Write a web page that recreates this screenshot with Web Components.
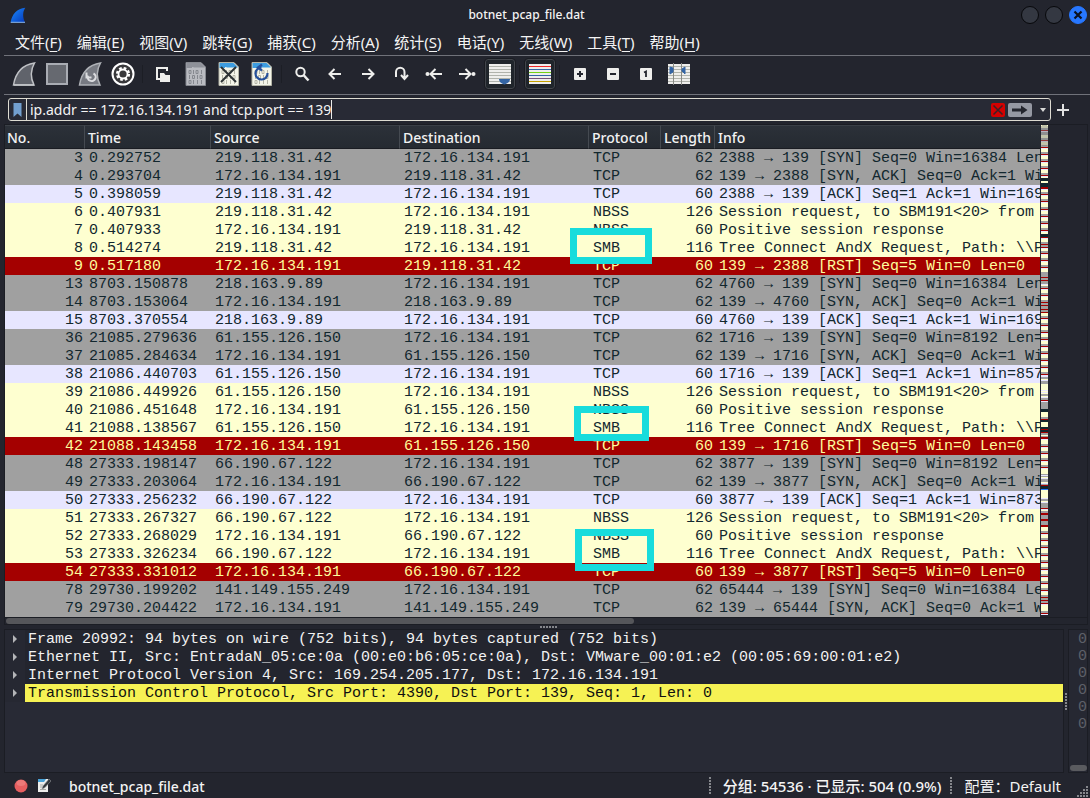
<!DOCTYPE html>
<html lang="zh-CN">
<head>
<meta charset="utf-8">
<title>botnet_pcap_file.dat</title>
<style>
  html { background: #23252e; }
  body { margin: 0; background: #23252e; }
</style>
</head>
<body>
<capture-app></capture-app>

<script>
const BASE = `
  *, *::before, *::after { box-sizing: border-box; }
  button { font: inherit; color: inherit; background: none; border: 0; padding: 0; margin: 0; }
  svg { display: block; }
`;
function define(name, html, setup) {
  const tpl = document.createElement('template');
  tpl.innerHTML = '<style>' + BASE + '</style>' + html;
  customElements.define(name, class extends HTMLElement {
    constructor() {
      super();
      this.attachShadow({ mode: 'open' }).appendChild(tpl.content.cloneNode(true));
      if (setup) setup(this.shadowRoot, this);
    }
  });
}

/* ---------- title bar ---------- */
define('title-bar', `
<style>
  :host { display: grid; grid-template-columns: 1fr auto 1fr; align-items: center; height: 30px; padding: 0 3px 0 10px; }
  h1 { margin: 0 44px 0 0; font-size: 12px; font-weight: 500; line-height: 16px; }
  .win { display: flex; justify-content: flex-end; gap: 6px; }
  .win button { width: 18px; height: 18px; border-radius: 50%; background: #343842; border: 1px solid #07080b; display: grid; place-items: center; }
  .win .close { background: #2777ff; border-color: #2777ff; }
</style>
<svg width="16" height="16" viewBox="0 0 16 16"><defs><linearGradient id="g" x1="0" y1="0" x2="1" y2="1"><stop offset="0" stop-color="#1d8cff"/><stop offset="1" stop-color="#0438b8"/></linearGradient></defs><path d="M.7 15.3C2 7 7 1.500 15.300.7C12.500 5 12.500 10 15 15.300Z" fill="url(#g)"/><path d="M.7 15.300H15" stroke="#8cb9ee"/></svg>
<h1><slot></slot></h1>
<div class="win">
  <button aria-label="最小化"></button><button aria-label="最大化"></button>
  <button class="close" aria-label="关闭"><svg width="10" height="10" viewBox="0 0 10 10"><path d="M1.500 1.500l7 7M8.500 1.500l-7 7" stroke="#0b1020" stroke-width="2.200"/></svg></button>
</div>`);

/* ---------- menu bar ---------- */
define('menu-bar', `
<style>
  :host { display: block; padding: 0 0 0 15px; height: 25px; font-weight: 400; }
  nav { display: flex; gap: 15px; line-height: 25px; }
  u { text-underline-offset: 3px; text-decoration-thickness: 1px; }
</style>
<nav></nav>`, root => {
  root.querySelector('nav').innerHTML = ['文件F','编辑E','视图V','跳转G','捕获C','分析A','统计S','电话Y','无线W','工具T','帮助H']
    .map(t => `<button>${t.slice(0, 2)}(<u>${t[2]}</u>)</button>`).join('');
});

/* ---------- tool bar ---------- */
const sheet = (top, page, ink) => `<path d="M2 0.500H17L21.500 5V23.500H2Z" fill="${page}" stroke="${ink}"/><path d="M2.500 1H16.500L21 5.500H11C9 5.500 8 4 8 6H2.500Z" fill="${top}"/>
  <g fill="none" stroke="${ink}" stroke-width="1"><path d="M5 8.500h2v3H5zM9.500 8v4M12 8.500h2v3h-2zM17.500 8v4M5.500 13v4M8.500 13.500h2v3h-2zM13.500 13v4M16 13.500h2v3h-2zM5 18.500h2v3H5zM9.500 18v4M13.500 18v4M17.500 18v4"/></g>`;
const lines = (cols) => `<rect x="1" y="2" width="22" height="20" fill="#eeeeec"/>` + cols.map((c, i) => `<rect x="1" y="${4 + i * 3}" width="22" height="1" fill="${c}"/>`).join('');
const G = '#b0b3ac';
const arrow = '<path d="M18 12H7M11.500 7L6.500 12l5 5" fill="none" stroke="#eeeeec" stroke-width="2"/>';
const ICONS = {
  start: ['开始捕获', '<path d="M1.500 23C3.500 11 9 3 22.500 1C18.500 8 18.500 16 22 23Z" fill="#60636b" stroke="#bfc1c5" stroke-width="1.500"/><path d="M2 23H22" stroke="#d5d7da" stroke-width="1"/>'],
  stop: ['停止捕获', '<rect x="2" y="2" width="20" height="20" fill="#666970" stroke="#a9acb3" stroke-width="2"/>'],
  restart: ['重新开始捕获', '<path d="M1.500 23C3.500 11 9 3 22.500 1C18.500 8 18.500 16 22 23Z" fill="#777a82" stroke="#aeb1b6" stroke-width="1.500"/><path d="M15.500 11.500a4 4 0 1 1-5.500 2M8.500 10.500v5h5" fill="none" stroke="#dcdde0" stroke-width="2"/>'],
  options: ['捕获选项', '<circle cx="12" cy="12" r="10.500" fill="#38383b" stroke="#fff" stroke-width="2"/><circle cx="12" cy="12" r="5.800" fill="none" stroke="#fff" stroke-width="2.600" stroke-dasharray="2.600 1.955"/><circle cx="12" cy="12" r="4.500" fill="#38383b" stroke="#fff" stroke-width="1.800"/>'],
  open: ['打开', '<path d="M9 17H6V6H16V9" fill="none" stroke="#eeeeec" stroke-width="2"/><path d="M9 11H13L14.500 13H19V20H9Z" fill="#eeeeec"/>'],
  save: ['保存', sheet('#8e9199', '#b9bbc1', '#85888f')],
  close: ['关闭文件', sheet('#3d9de0', '#f4f5e9', '#b4b5a7') + '<path d="M4 5l15 15M19 5L4 20" stroke="#2e3436" stroke-width="2"/>'],
  reload: ['重新加载', sheet('#3d9de0', '#f4f5e9', '#b4b5a7') + '<path d="M17.500 11a6 6 0 1 1-6-5.500M12 2.500l-4 3 4 3" fill="none" stroke="#25509a" stroke-width="2.200"/>'],
  find: ['查找', '<circle cx="10.500" cy="10" r="4.200" fill="none" stroke="#eeeeec" stroke-width="2"/><path d="M13.500 13l5 5.500" stroke="#eeeeec" stroke-width="2.500"/>'],
  back: ['后退', arrow],
  fwd: ['前进', `<g transform="matrix(-1 0 0 1 24 0)">${arrow}</g>`],
  jump: ['跳转到分组', '<path d="M7 15V10a4 4 0 0 1 8.500 0V16M12 13l3.500 4 3.500-4" fill="none" stroke="#eeeeec" stroke-width="2"/>'],
  first: ['首个分组', '<circle cx="5.500" cy="12" r="2" fill="#eeeeec"/><g transform="translate(2 0)">' + arrow + '</g>'],
  last: ['末个分组', `<g transform="matrix(-1 0 0 1 24 0)"><circle cx="5.500" cy="12" r="2" fill="#eeeeec"/><g transform="translate(2 0)">${arrow}</g></g>`],
  scroll: ['自动滚动', lines([G,G,G,G,G,G]) + '<path d="M11 17H22C22 20 18.500 22 16.500 22.500C14 22 11 20 11 17Z" fill="#3465a4"/>'],
  color: ['分组着色', lines(['#ef2929','#3465a4','#73d216','#3465a4','#75507b','#c4a000'])],
  plus: ['放大', '<rect x="6" y="6" width="12" height="12" rx="1" fill="#eeeeec"/><path d="M9 12h6M12 9v6" stroke="#23252e" stroke-width="2"/>'],
  minus: ['缩小', '<rect x="6" y="6" width="12" height="12" rx="1" fill="#eeeeec"/><path d="M9 12h6" stroke="#23252e" stroke-width="2"/>'],
  one: ['正常大小', '<rect x="6" y="6" width="12" height="12" rx="1" fill="#eeeeec"/><path d="M10 10.500L12 9.500V15" fill="none" stroke="#23252e" stroke-width="1.800"/>'],
  cols: ['调整列宽', lines([G,G,G,G,G,G]) + '<path d="M6.500 1V23M14.500 1V23" stroke="#888a85"/><path d="M3 5l3 1v4l-3 2ZM18 5l-3 2v2l3 3Z" fill="#3465a4" stroke="#3465a4"/>']
};
define('tool-icon', `
<style>
  :host { display: block; width: 33px; }
  button { width: 30px; height: 30px; margin: 0 1px 0 2px; display: grid; place-items: center; border: 1px solid transparent; border-radius: 3px; }
  .on { border-color: #42454b; background: #20252b; outline: 1px solid #1a1c22; }
</style>
<button></button>`);
define('tool-bar', `
<style>
  :host { display: block; margin-left: 4px; border: solid #70727a; border-width: 1px 0; }
  .row { display: flex; align-items: center; height: 38px; padding: 0 0 2px 3px; }
  i { width: 1px; height: 18px; margin: 0 3px; background: #1c1e25; }
</style>
<div class="row"></div>`, root => {
  const groups = [['start','stop','restart','options'], ['open','save','close','reload'], ['find','back','fwd','jump','first','last','scroll*'], ['color*'], ['plus','minus','one','cols']];
  const row = root.querySelector('.row');
  groups.forEach((group, i) => {
    if (i) row.append(document.createElement('i'));
    for (const entry of group) {
      const icon = document.createElement('tool-icon');
      const [label, art] = ICONS[entry.replace('*', '')];
      const button = icon.shadowRoot.querySelector('button');
      button.setAttribute('aria-label', label);
      button.classList.toggle('on', entry.endsWith('*'));
      button.innerHTML = `<svg width="24" height="24" viewBox="0 0 24 24">${art}</svg>`;
      row.append(icon);
    }
  });
});

/* ---------- display filter ---------- */
define('filter-bar', `
<style>
  :host { display: flex; align-items: center; gap: 5px; padding: 3px 20px 3px 8px; }
  .field { flex: 1; display: flex; align-items: center; height: 23px; border: 1px solid #dedcd2; border-radius: 3px; background: #282a35; }
  .mark { width: 18px; height: 21px; display: grid; place-items: center; border-right: 1px solid #dedcd2; }
  input { field-sizing: content; height: 19px; padding: 0; margin-left: 3px; border: 0; border-right: 1px solid #eeeeec; background: none; color: #f4f4f4; font: inherit; font-size: 14px; font-weight: 400; outline: 0; }
  .clear { margin-left: auto; width: 14px; height: 14px; border-radius: 2px; background: #d40000; display: grid; place-items: center; }
  .apply { margin: 0 8px 0 3px; width: 24px; height: 14px; border-radius: 2px; background: #9598a3; display: grid; place-items: center; }
  .more { width: 6px; margin-right: 4px; }
  .add { width: 14px; height: 14px; }
</style>
<div class="field">
  <button class="mark" aria-label="书签"><svg width="9" height="14" viewBox="0 0 9 14"><path d="M.5 0H8.500V14L4.500 10.500L.5 14Z" fill="#729fcf"/></svg></button>
  <input type="text" aria-label="显示过滤器" value="ip.addr == 172.16.134.191 and tcp.port == 139">
  <button class="clear" aria-label="清除"><svg width="12" height="12" viewBox="0 0 12 12"><path d="M1.500 1.500l9 9M10.500 1.500l-9 9" stroke="#3b2025" stroke-width="1.500"/></svg></button>
  <button class="apply" aria-label="应用"><svg width="16" height="10" viewBox="0 0 16 10"><path d="M0 3.500H9V0.500L15.500 5L9 9.500V6.500H0Z" fill="#23252e"/></svg></button>
  <button class="more" aria-label="历史"><svg width="6" height="4" viewBox="0 0 6 4"><path d="M0 0H6L3 4Z" fill="#d8d8d8"/></svg></button>
</div>
<button class="add" aria-label="添加"><svg width="14" height="14" viewBox="0 0 14 14"><path d="M1 7h12M7 1v12" stroke="#e2e2e2" stroke-width="2"/></svg></button>`);

/* ---------- annotation frame, placed over its cell ---------- */
define('mark-frame', `
<style>
  :host { position: absolute; z-index: 2; display: block; box-sizing: border-box; border: 7px solid #18dcdc; }
</style>`);

/* ---------- packet list ---------- */
const A = '172.16.134.191';
const SYN = (p, w) => `${p} → 139 [SYN] Seq=0 Win=${w} Len=0 MSS=1460`;
const SA = p => `139 → ${p} [SYN, ACK] Seq=0 Ack=1 Win=64240 Len=0`;
const ACK = (p, w) => `${p} → 139 [ACK] Seq=1 Ack=1 Win=${w} Len=0`;
const REQ = 'Session request, to SBM191&lt;20&gt; from ', POS = 'Positive session response', TREE = 'Tree Connect AndX Request, Path: \\\\PC';
const RST = (p, w) => `139 → ${p} [RST] Seq=5 Win=${w} Len=0`;
const ROWS = [];
function flow(ip, kinds) {
  for (const [no, time, out, kind, proto, len, info] of kinds)
    ROWS.push({ no, time, src: out ? A : ip, dst: out ? ip : A, kind, proto, len, info });
}
flow('219.118.31.42', [[3,'0.292752',0,'s','TCP',62,SYN(2388,16384)],[4,'0.293704',1,'s','TCP',62,SA(2388)],[5,'0.398059',0,'a','TCP',60,ACK(2388,16944)],[6,'0.407931',0,'n','NBSS',126,REQ],[7,'0.407933',1,'n','NBSS',60,POS],[8,'0.514274',0,'n','SMB',116,TREE],[9,'0.517180',1,'r','TCP',60,RST(2388,0)]]);
flow('218.163.9.89', [[13,'8703.150878',0,'s','TCP',62,SYN(4760,16384)],[14,'8703.153064',1,'s','TCP',62,SA(4760)],[15,'8703.370554',0,'a','TCP',60,ACK(4760,16944)]]);
flow('61.155.126.150', [[36,'21085.279636',0,'s','TCP',62,SYN(1716,8192)],[37,'21085.284634',1,'s','TCP',62,SA(1716)],[38,'21086.440703',0,'a','TCP',60,ACK(1716,8576)],[39,'21086.449926',0,'n','NBSS',126,REQ],[40,'21086.451648',1,'n','NBSS',60,POS],[41,'21088.138567',0,'n','SMB',116,TREE],[42,'21088.143458',1,'r','TCP',60,RST(1716,0)]]);
flow('66.190.67.122', [[48,'27333.198147',0,'s','TCP',62,SYN(3877,8192)],[49,'27333.203064',1,'s','TCP',62,SA(3877)],[50,'27333.256232',0,'a','TCP',60,ACK(3877,8736)],[51,'27333.267327',0,'n','NBSS',126,REQ],[52,'27333.268029',1,'n','NBSS',60,POS],[53,'27333.326234',0,'n','SMB',116,TREE],[54,'27333.331012',1,'r','TCP',60,RST(3877,0)]]);
flow('141.149.155.249', [[78,'29730.199202',0,'s','TCP',62,SYN(65444,16384)],[79,'29730.204422',1,'s','TCP',62,SA(65444)]]);

define('packet-list', `
<style>
  :host { display: block; overflow: hidden; min-width: 0; }
  table { width: 100%; table-layout: fixed; border-collapse: separate; border-spacing: 0; }
  .no { width: 80px; } .time { width: 126px; } .addr { width: 189px; } .proto { width: 72px; } .len { width: 54px; }
  th { height: 24px; padding: 2px 0 0 3px; text-align: left; font-size: 14px; font-weight: 500; line-height: 20px; color: #f2f2f2;
       background: linear-gradient(#2c3139, #252a31); border-top: 1px solid #3a3f46; border-bottom: 1px solid #1a1c22; border-right: 1px solid #454a51; }
  th:first-child { padding-left: 2px; } th:last-child { border-right: 0; }
  td { height: 18px; padding: 1px 0 0 4px; line-height: 17px; font-family: "Liberation Mono", monospace; font-size: 15px; font-weight: 400; white-space: pre; overflow: hidden; }
  td.num { text-align: right; padding: 1px 2px 0 0; }
  td.p { position: relative; overflow: visible; }
  .s { background: #a0a0a0; color: #12272e; } .a { background: #e7e6ff; color: #12272e; }
  .n { background: #feffd0; color: #12272e; } .r { background: #a40000; color: #fffc9c; }
  .m8 { left: -19px; top: -11px; width: 82px; height: 36px; }
  .m41 { left: -15px; top: -13px; width: 75px; height: 35px; }
  .m53 { left: -14px; top: -16px; width: 79px; height: 42px; }
</style>
<table>
  <colgroup><col class="no"><col class="time"><col class="addr"><col class="addr"><col class="proto"><col class="len"><col></colgroup>
  <thead><tr><th>No.</th><th>Time</th><th>Source</th><th>Destination</th><th>Protocol</th><th>Length</th><th>Info</th></tr></thead>
  <tbody></tbody>
</table>`, root => {
  root.querySelector('tbody').innerHTML = ROWS.map(r => `<tr class="${r.kind}"><td class="num">${r.no}</td><td>${r.time}</td><td>${r.src}</td><td>${r.dst}</td><td class="p">${r.proto}${r.proto === 'SMB' ? `<mark-frame class="m${r.no}"></mark-frame>` : ''}</td><td class="num">${r.len}</td><td>${r.info}</td></tr>`).join('');
});

/* ---------- colour overview strip ---------- */
define('traffic-strip', `
<style>:host { display: block; width: 7px; margin-left: 1px; overflow: hidden; }</style>
<svg width="7" height="490" viewBox="0 0 7 490" shape-rendering="crispEdges"></svg>`, root => {
  const bar = (y, h, c) => `<rect y="${y}" width="7" height="${h}" fill="${c}"/>`;
  const reds = [5,15,22,29,36,43,50,63,69,76,84,91,98,105,112,119,122,128,135,142,149,153,156,158,163,170,177,180,183,186,193,200,207,214,221,228,235,242,249,275,279,294,305,307,313,321,328,335,342,360,383,388,394,400,408,415,422,430,437,444,451,458,465,472,475,478,488];
  let out = bar(0, 490, '#feffd0');
  for (const y of reds) out += bar(y - 2, 2, '#a0a0a0') + bar(y, 1, '#a40000') + bar(y + 1, 1, '#e7e6ff');
  for (const [y, h] of [[7,3],[149,10],[183,5],[252,2],[256,3],[269,2],[279,5],[306,4],[349,3],[354,3],[374,2],[378,3],[389,4],[395,5]]) out += bar(y, h, '#a0a0a0');
  for (const y of [251,255,265,267,272,350,353,358,373,377]) out += bar(y, 1, '#e7e6ff');
  for (const [y, h] of [[53,3],[58,3],[61,1],[109,3],[284,3],[295,2],[302,5],[361,3]]) out += bar(y, h, '#12272e');
  for (const y of [62,152,155,184,187,304,307,312]) out += bar(y, 1, '#a40000');
  for (const y of [388,394,400]) out += bar(y, 2, '#a40000');
  out += bar(364, 1, '#2777ff');
  out += '<rect width="7" height="21" rx="3" fill="#77797d" fill-opacity=".45"/>';
  root.querySelector('svg').innerHTML = out;
});

define('packet-pane', `
<style>
  :host { display: block; margin: 0 2px 0 4px; border: 1px solid #1b1d24; }
  .view { display: grid; grid-template-columns: minmax(0, 1fr) auto 39px; }
  .bar { height: 7px; border-top: 1px solid #1b1d24; }
  .thumb { width: 58%; height: 6px; margin-left: 1px; border-radius: 3px; background: #55565a; }
</style>
<div class="view"><packet-list></packet-list><traffic-strip></traffic-strip></div>
<div class="bar"><div class="thumb"></div></div>`);

/* ---------- packet details and bytes ---------- */
define('tree-row', `
<style>
  :host { display: grid; grid-template-columns: 20px minmax(0, 1fr); height: 18px; line-height: 17px; color: #f2f2f2; }
  button { display: grid; align-items: center; padding-left: 8px; background: #262832; }
  .text { padding: 1px 0 0 3px; white-space: pre; overflow: hidden; background: #23252e; }
  :host([hit]) .text { background: #f6f254; color: #101010; }
</style>
<button aria-label="展开"><svg width="4" height="8" viewBox="0 0 4 8"><path d="M0 0L4 4L0 8Z" fill="#b4b5b8"/></svg></button>
<div class="text"><slot></slot></div>`);
define('detail-area', `
<style>
  :host { flex: 1; display: grid; grid-template-columns: minmax(0, 1fr) 4px 20px; min-height: 120px; margin: 4px 2px 0 4px; font-family: "Liberation Mono", monospace; font-size: 15px; font-weight: 400; }
  .tree, .bytes { border: 1px solid #1b1d24; background: #282a35; overflow: hidden; }
  .bytes { display: flex; flex-direction: column; align-items: flex-end; padding-top: 1px; line-height: 17px; color: #5d6068; background: #262832; }
  .bytes ol { list-style: none; margin: 0; padding: 0; }
  .thumb { width: 17px; height: 6px; margin: auto 0 1px; border-radius: 3px; background: #5a5b5f; }
  .grip { align-self: center; justify-self: center; width: 2px; height: 17px; background: repeating-linear-gradient(#85878c 0 2px, transparent 2px 3px); }
</style>
<div class="tree">
  <tree-row>Frame 20992: 94 bytes on wire (752 bits), 94 bytes captured (752 bits)</tree-row>
  <tree-row>Ethernet II, Src: EntradaN_05:ce:0a (00:e0:b6:05:ce:0a), Dst: VMware_00:01:e2 (00:05:69:00:01:e2)</tree-row>
  <tree-row>Internet Protocol Version 4, Src: 169.254.205.177, Dst: 172.16.134.191</tree-row>
  <tree-row hit>Transmission Control Protocol, Src Port: 4390, Dst Port: 139, Seq: 1, Len: 0</tree-row>
</div>
<div class="grip"></div>
<div class="bytes"><ol><li>0</li><li>0</li><li>0</li><li>0</li><li>0</li><li>0</li></ol><div class="thumb"></div></div>`);

/* ---------- status bar ---------- */
define('status-bar', `
<style>
  :host { display: flex; align-items: center; height: 25px; padding: 0 0 0 14px; line-height: 20px; }
  .name { flex: 1; padding-left: 18px; padding-top: 2px; font-size: 14px; }
  .note { padding-left: 9px; }
  .grip { width: 2px; height: 17px; background: repeating-linear-gradient(#85878c 0 2px, transparent 2px 3px); }
  .stat { padding: 0 9px 0 12px; white-space: pre; }
  .profile { padding-right: 0; font-weight: 400; }
  .size { align-self: flex-end; width: 12px; height: 12px; margin-left: 16px; margin-right: 1px; }
</style>
<button aria-label="专家信息"><svg width="14" height="14" viewBox="0 0 14 14"><circle cx="7" cy="7" r="6.500" fill="#e65f60"/><ellipse cx="7" cy="4" rx="4.500" ry="3" fill="#f08a88" opacity=".6"/></svg></button>
<button class="note" aria-label="捕获文件注释"><svg width="14" height="15" viewBox="0 0 14 15"><path d="M1 1H11V14H1Z" fill="#eeeeec"/><path d="M1 1H9L7 4H1Z" fill="#4aa3d8"/><path d="M3 7h3M3 9h2M3 11.500h6" stroke="#a9aaa6"/><path d="M5 11L6 8L12 1L14 3L8 9.500Z" fill="#33373b" stroke="#8d9093" stroke-width=".6"/></svg></button>
<span class="name">botnet_pcap_file.dat</span>
<span class="grip"></span><span class="stat">分组: 54536 · 已显示: 504 (0.9%)</span>
<span class="grip"></span><span class="stat profile">配置：Default</span>
<svg class="size" viewBox="0 0 12 12" fill="#85878c"><path d="M9 0h2v2H9zM6 3h2v2H6zM9 3h2v2H9zM3 6h2v2H3zM6 6h2v2H6zM9 6h2v2H9zM0 9h2v2H0zM3 9h2v2H3zM6 9h2v2H6zM9 9h2v2H9z"/></svg>`);

define('capture-app', `
<style>
  :host { display: flex; flex-direction: column; min-height: 100vh; background: #23252e; color: #f4f4f4;
    font: 500 15px "Noto Sans", "Noto Sans CJK SC", sans-serif; }
  .split { position: relative; height: 0; }
  .split::after { content: ""; position: absolute; left: 50%; top: 1px; width: 17px; height: 2px; margin-left: -5px; background: repeating-linear-gradient(90deg, #85878c 0 2px, transparent 2px 3px); }
</style>
<title-bar>botnet_pcap_file.dat</title-bar>
<menu-bar></menu-bar>
<tool-bar></tool-bar>
<filter-bar></filter-bar>
<packet-pane></packet-pane>
<div class="split"></div>
<detail-area></detail-area>
<status-bar></status-bar>`);
</script>
</body>
</html>
